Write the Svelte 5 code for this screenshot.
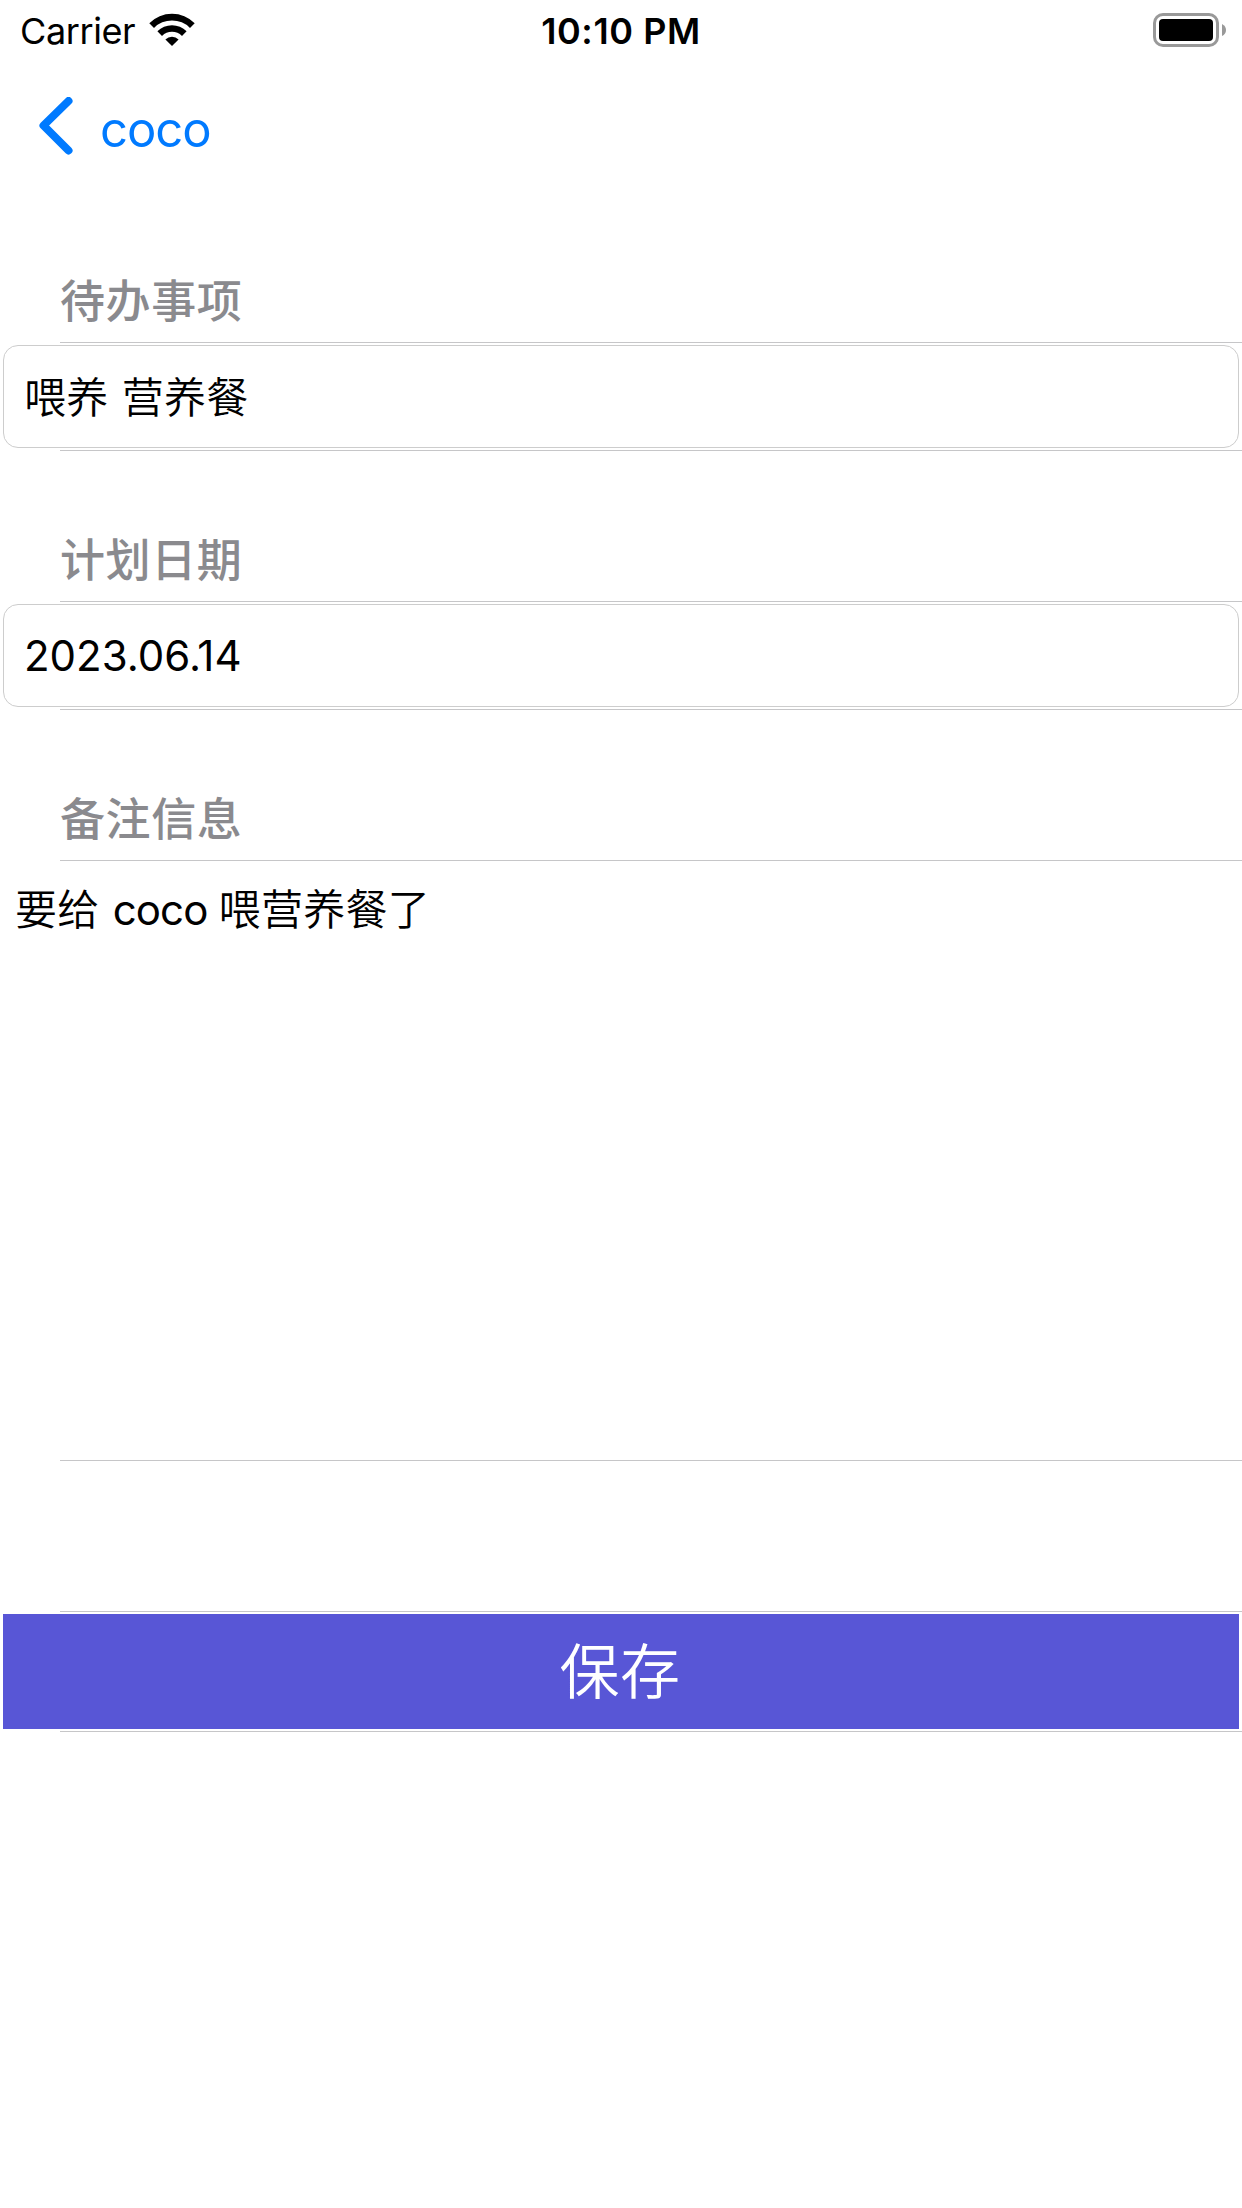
<script>
	let title = 'coco';
	let todo = '喂养 营养餐';
	let date = '2023.06.14';
</script>

<div class="screen">
	<div class="status-bar">
		<div class="carrier">
			<span>Carrier</span>
			<svg class="wifi" width="46" height="34" viewBox="0 0 46 34">
				<path d="M0.3 10.2 A32 32 0 0 1 45.7 10.2 L41 14.9 A25.4 25.4 0 0 0 5 14.9 Z" />
				<path d="M8.4 18.3 A20.6 20.6 0 0 1 37.6 18.3 L33 22.9 A14.1 14.1 0 0 0 13 22.9 Z" />
				<path d="M16.4 26.4 A9.3 9.3 0 0 1 29.6 26.4 L23 33 Z" />
			</svg>
		</div>
		<div class="time">10:10 PM</div>
		<svg class="battery" width="74" height="34" viewBox="0 0 74 34">
			<rect x="1.5" y="1.5" width="63" height="31" rx="8.5" fill="none" stroke="#999" stroke-width="3" />
			<rect x="6" y="6" width="54" height="22" rx="4" />
			<path d="M69 11 Q73 13 73 17 Q73 21 69 23 Z" fill="#999" />
		</svg>
	</div>

	<div class="nav-bar">
		<svg width="34" height="58" viewBox="0 0 34 58">
			<path d="M29.5 4 L4.5 28.5 L29.5 53.5" />
		</svg>
		<span>{title}</span>
	</div>

	<div class="form">
		<h2>待办事项</h2>
		<div class="row">
			<div class="field">{todo}</div>
		</div>

		<h2>计划日期</h2>
		<div class="row">
			<div class="field date">{date}</div>
		</div>

		<h2>备注信息</h2>
		<div class="row note">要给 <span class="name">{title}</span> 喂营养餐了</div>

		<h2></h2>
		<div class="row">
			<button>保存</button>
		</div>
	</div>
</div>

<style>
	:global(body) {
		margin: 0;
		background: #fff;
	}

	.screen {
		width: 1242px;
		height: 2208px;
		overflow: hidden;
		background: #fff;
		color: #000;
		font-family: Inter, 'Noto Sans CJK SC', sans-serif;
	}

	.status-bar {
		display: grid;
		grid-template-columns: 1fr auto 1fr;
		align-items: start;
		height: 60px;
		padding: 0 15px 0 20px;
		box-sizing: border-box;
		font-size: 36px;
		line-height: 63px;
	}

	.carrier {
		display: flex;
		gap: 14px;
		letter-spacing: -0.4px;
	}

	.wifi {
		margin-top: 13px;
	}

	.time {
		margin-left: -5px;
		font-weight: 600;
		letter-spacing: 0.6px;
	}

	.battery {
		justify-self: end;
		margin-top: 13px;
	}

	.nav-bar {
		display: flex;
		align-items: center;
		gap: 27px;
		height: 132px;
		padding-left: 39px;
		box-sizing: border-box;
		color: #007aff;
		font-size: 49px;
		letter-spacing: -1px;
	}

	.nav-bar span {
		padding-top: 6px;
	}

	.nav-bar path {
		fill: none;
		stroke: #007aff;
		stroke-width: 8;
		stroke-linecap: round;
		stroke-linejoin: round;
	}

	h2 {
		height: 151px;
		margin: 0 0 0 60px;
		padding-top: 77px;
		box-sizing: border-box;
		border-bottom: 1px solid #c6c6c8;
		color: #8a8a8e;
		font-size: 45px;
		font-weight: 500;
		line-height: 66px;
		letter-spacing: 0.6px;
	}

	/* separator under each row starts at the text inset */
	.row {
		padding: 2px 3px 3px;
		background: linear-gradient(#c6c6c8, #c6c6c8) 60px 100% / 100% 1px no-repeat;
	}

	.field {
		height: 103px;
		padding-left: 20px;
		box-sizing: border-box;
		border: 1px solid #cdcdcd;
		border-radius: 15px;
		font-size: 42px;
		font-weight: 350;
		line-height: 103px;
		letter-spacing: 0.3px;
		word-spacing: 1px;
	}

	.date {
		font-weight: 400;
		line-height: 101px;
		letter-spacing: 0;
	}

	.note {
		height: 600px;
		padding: 16px 15px 0;
		box-sizing: border-box;
		font-size: 42px;
		font-weight: 350;
		line-height: 66px;
		letter-spacing: 0.3px;
	}

	.name {
		margin: 0 -1px 0 1px;
		font-weight: 400;
		letter-spacing: -0.9px;
	}

	button {
		display: block;
		width: 100%;
		height: 115px;
		padding: 0 2px 0 0;
		border: 0;
		background: #5856d6;
		color: #fff;
		font-family: inherit;
		font-size: 60px;
		font-weight: 350;
		line-height: 117px;
		letter-spacing: 0.6px;
	}
</style>
